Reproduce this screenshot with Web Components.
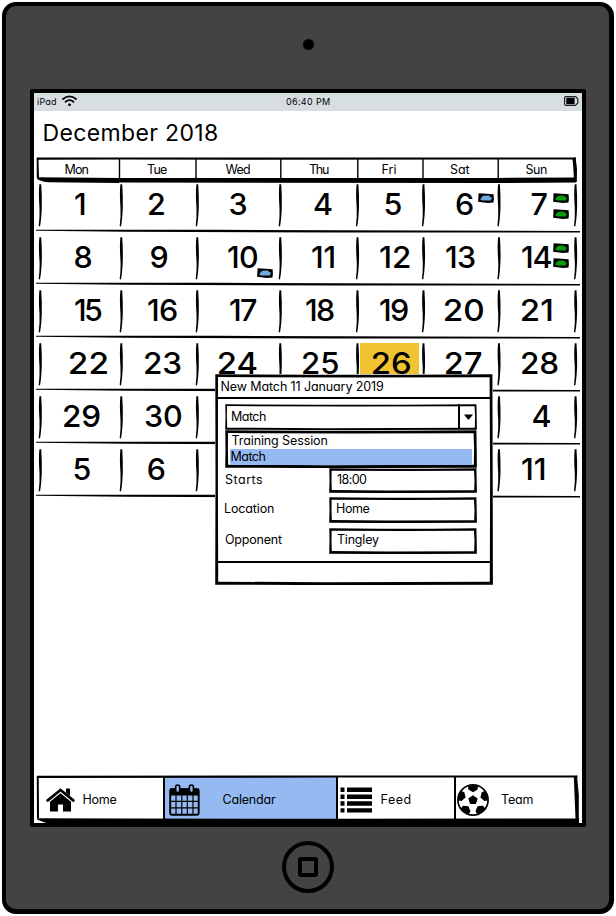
<!DOCTYPE html>
<html lang="en">
<head>
<meta charset="utf-8">
<title>Team calendar</title>
<style>
body{margin:0;background:#fff;color:#000;font-family:Inter,"Open Sans",sans-serif;font-size:12.5px}
</style>
</head>
<body>
<tablet-frame>
  <status-bar></status-bar>
  <month-view></month-view>
  <tab-bar>
    <tab-item icon="home" label="Home" w="33" at="46.5" style="width:128px"></tab-item>
    <tab-item icon="calendar" label="Calendar" w="53.5" at="57.5" active style="width:173px"></tab-item>
    <tab-item icon="list" label="Feed" w="29" at="43.5" style="width:118px"></tab-item>
    <tab-item icon="ball" label="Team" w="31.5" at="45" style="width:122px"></tab-item>
  </tab-bar>
  <match-dialog slot="overlay"></match-dialog>
</tablet-frame>

<script>
const ctx = document.createElement('canvas').getContext('2d');
function shadow(el, html){
  const t = document.createElement('template');
  t.innerHTML = html;
  const r = el.attachShadow({mode:'open'});
  r.appendChild(t.content.cloneNode(true));
  return r;
}

/* A single line of text whose visible ink is `w` pixels wide: tracked, or widened when `stretch` is set. */
class InkText extends HTMLElement{
  connectedCallback(){
    if(this.shadowRoot) return;
    const r = shadow(this, `<style>
      :host{display:block;white-space:pre;flex:none}
      span{display:inline-block;font-feature-settings:"cv11","kern";}
    </style><span></span>`);
    const s = r.querySelector('span'), text = this.getAttribute('text'), w = +this.getAttribute('w');
    s.textContent = text;
    const cs = getComputedStyle(s);
    ctx.font = cs.fontWeight+' '+cs.fontSize+' '+cs.fontFamily;
    const a = ctx.measureText(text[0]), b = ctx.measureText(text[text.length-1]);
    const lsb = -a.actualBoundingBoxLeft, rsb = b.width - b.actualBoundingBoxRight;
    const ink = s.getBoundingClientRect().width - lsb - rsb;
    s.style.marginLeft = -lsb+'px';
    if(this.hasAttribute('stretch') && w > ink && text.length > 1){
      s.style.transformOrigin = lsb+'px 50%';
      s.style.transform = `scaleX(${w/ink})`;
    }
    else if(text.length > 1) s.style.letterSpacing = (w-ink)/(text.length-1)+'px';
    else s.style.marginLeft = (w-ink)/2-lsb+'px';
    this.style.width = w+'px';
  }
}
customElements.define('ink-text', InkText);

class TabletFrame extends HTMLElement{
  constructor(){
    super();
    shadow(this, `<style>
      :host{display:block;padding:2px;width:612px;height:912px}
      .body{box-sizing:border-box;width:612px;height:912px;border:4px solid #000;border-width:4px 5px 5px 4px;border-radius:14px;background:#434343;display:flex;flex-direction:column;align-items:center}
      .top{height:83px;display:flex;align-items:center}
      .cam{width:11px;height:11px;border-radius:50%;background:#000;margin:-6px 0 0 1px}
      .screen{position:relative;box-sizing:border-box;width:556px;height:738px;border:4px solid #000;border-radius:2px;background:#fff;display:flex;flex-direction:column;align-self:flex-start;margin-left:24px}
      .bottom{flex:1;display:flex;align-items:center}
      .home{box-sizing:border-box;width:52px;height:52px;border:4px solid #000;border-radius:50%;display:grid;place-items:center;margin-top:-2px}
      .home i{box-sizing:border-box;width:20px;height:20px;border:4px solid #000;border-radius:3px}
    </style>
    <div class="body"><div class="top"><div class="cam"></div></div>
      <div class="screen"><slot></slot><slot name="overlay"></slot></div>
      <div class="bottom"><div class="home"><i></i></div></div></div>`);
  }
}

class StatusBar extends HTMLElement{
  constructor(){
    super();
    shadow(this, `<style>
      :host{display:grid;grid-template-columns:252px 1fr auto;align-items:center;height:18px;line-height:15px;background:#d7dee1;font-size:9px;font-weight:400}
      .l{display:flex;align-items:center;padding-left:3px;gap:6px}
      svg{display:block}
      ink-text{margin-top:-1px}
      .bat{margin:-2px 3px 0 0}
      .wifi{margin-top:-2px}
    </style>
    <div class="l"><ink-text text="iPad" w="19"></ink-text>
      <svg class="wifi" width="15" height="12" viewBox="0 0 15 12" fill="none" stroke="#000" stroke-width="1.8" stroke-linecap="round"><path d="M1 4Q7.5-1.3 14 4"/><path d="M3.6 6.8Q7.5 3.4 11.4 6.8"/><circle cx="7.5" cy="9.7" r="1" fill="#000" stroke-width="1"/></svg></div>
    <ink-text text="06:40 PM" w="44"></ink-text>
    <svg class="bat" width="15" height="10" viewBox="0 0 15 10"><path d="M1.5.7H11.5Q12.3.9 12.5 1.6L13.8 3V7L12.5 8.2Q12.3 9.1 11.5 9.3H1.5Q.7 9.2.6 8V2Q.7.8 1.5.7Z" fill="none" stroke="#222" stroke-width="1.2"/><rect x="2.3" y="1.8" width="8.3" height="6.4" fill="#000"/></svg>`);
  }
}

class EventChip extends HTMLElement{
  connectedCallback(){
    if(this.shadowRoot) return;
    shadow(this, `<style>:host{display:block;width:16px;height:11px}svg{display:block}</style>
    <svg width="16" height="11" viewBox="0 0 16 11"><path d="M.6.2L5 .6 15.6 1.2 15.9 6 15.5 9.5 10 10 .1 8.8Z"/><path d="M2.2 6.3L3.4 4.6 5.2 2.8 11.2 2.6 12 4 14 4.4 12.8 7.4 4 7.4Z" fill="${this.getAttribute('color')}"/></svg>`);
  }
}
customElements.define('event-chip', EventChip);

const B='#6fa8dc', G='#0a9b12';
const COLS=[37,120,196,280,357,423,498,582];
/* [day, ink left, ink width, chips: [colour, left, top]] */
const WEEKS=[
 [[1,75,10],[2,148,17],[3,230,16],[4,314,18],[5,386,15],[6,456,17,[[B,478,10]]],[7,532,15,[[G,553,10],[G,553,26]]]],
 [[8,75,16],[9,151,16],[10,228,29,[[B,257,32]]],[11,312,22.5],[12,380,29.5],[13,446,29],[14,522,29.5,[[G,553,7],[G,553,22]]]],
 [[15,75,27],[16,148,29],[17,230,27],[18,306,28],[19,380,28],[20,445,38],[21,522,30]],
 [[22,70,37],[23,145,36],[24,219,38],[25,303,35.5],[26,373,37.5],[27,446,36],[28,522,36]],
 [[29,64,36],[30,145,36],null,null,null,null,[4,533,17]],
 [[5,75,15],[6,148,16.5],null,null,null,null,[11,522,23]]
];
const HEADS=[['Mon',65.5,23],['Tue',147,20],['Wed',225.5,24.5],['Thu',309,20],['Fri',382.5,14],['Sat',450,19.5],['Sun',525.5,21.5]];

class WeekRow extends HTMLElement{
  set days(days){
    const strokes=[40,121,197,280,357.2,423.2,498.7,575.3].map(x=>{
      const k=x-36;
      return `<path d="M${k-.6} 1.2L${k+1.2} 1.2Q${k+2.1} 14 ${k+1.8} 24Q${k+1.4} 36 ${k} 43.5L${k-1.3} 43Q${k-.1} 34 ${k-.5} 25Q${k-1.6} 10 ${k-.6} 1.2Z"/>`;
    }).join('');
    shadow(this, `<style>
      :host{display:grid;height:53px;width:546px}
      svg,.days{grid-area:1/1}
      svg{display:block;pointer-events:none;z-index:1}
      .days{display:grid;grid-template-columns:${COLS.slice(1).map((c,i)=>c-COLS[i]+'px').join(' ')};margin-left:1px;line-height:41px;font-size:30.5px;font-weight:500}
      .day{position:relative;display:flex;align-items:flex-start}
      .today{background:linear-gradient(#f1c232,#f1c232) 3px 1px/59px 45px no-repeat}
      event-chip{position:absolute}
    </style>
    <svg width="546" height="53" viewBox="0 0 546 53">${strokes}<path d="M0 46.7L180 46.8 544 47.9 544 49.4 300 49.4 90 48.8 0 47.8Z"/></svg>
    <div class="days">${days.map((d,i)=>d?`<div class="day ${d[0]===26?'today':''}"><ink-text stretch text="${d[0]}" w="${d[2]}" style="margin-left:${d[1]-COLS[i]}px"></ink-text>${(d[3]||[]).map(c=>`<event-chip color="${c[0]}" style="left:${c[1]-COLS[i]}px;top:${c[2]}px"></event-chip>`).join('')}</div>`:'<div class="day"></div>').join('')}</div>`);
  }
}
customElements.define('week-row', WeekRow);

class MonthView extends HTMLElement{
  constructor(){
    super();
    const r=shadow(this, `<style>
      :host{display:flex;flex-direction:column;flex:1;padding-left:2px}
      .title{height:46px;line-height:44px;font-size:23px;padding-left:8.5px}
      .head{display:grid;height:26px;width:546px}
      svg,.names{grid-area:1/1}
      svg{display:block}
      .names{display:grid;grid-template-columns:${COLS.slice(1).map((c,i)=>c-COLS[i]+'px').join(' ')};margin-left:1px;line-height:25px}
    </style>
    <div class="title"><ink-text text="December 2018" w="172.5"></ink-text></div>
    <div class="head"><svg width="546" height="26" viewBox="0 0 546 26">
      <path d="M.8.4L200 .6 540 .4V2.4L200 2.7 83 2.6 1 2.8Z"/>
      <path d="M.7 1H2.4L3 20 2.4 22 .8 21Z"/>
      <path d="M1.5 20.3L83 20.9 83 26 12 25.3 8 24.8 1.5 22.6Z"/>
      <path d="M82 20.9H462L540 20.6V25.4L462 26 83 25.6Z"/>
      <path d="M536.4 1L539.6.6 541 12 540.8 25H538L537.4 12Z"/>
      <path d="M83.5 2V22M160 2V22M244.8 2V22M321.8 2V22M387 2V22M462.2 2V22" stroke="#000" stroke-width="1.4"/></svg>
      <div class="names">${HEADS.map((h,i)=>`<ink-text text="${h[0]}" w="${h[2]}" style="margin-left:${h[1]-COLS[i]}px"></ink-text>`).join('')}</div></div>
    <div class="weeks"></div>`);
    for(const w of WEEKS){const row=document.createElement('week-row');row.days=w;r.querySelector('.weeks').appendChild(row);}
  }
}

const PATCH='<path d="M11 2L16 1 21 2 20.6 5.4 16 8.2 11.4 5.4Z"';
const ICONS={
 home:`<svg width="29" height="24" viewBox="0 0 29 24"><path d="M20 .6H24V8L20 4.6Z"/><path d="M.8 13.2L14.5 2 28.2 13.2" fill="none" stroke="#000" stroke-width="2.7"/><path d="M4 13.8L14.5 5.3 25 13.8V23.5H17V16.5H12V23.5H4Z"/></svg>`,
 calendar:`<svg width="31" height="32" viewBox="0 0 31 32"><path d="M1 5.5Q1 4.5 2 4.5H29Q30 4.5 30 5.5V11.5H1Z"/><rect x="1.2" y="5.2" width="28.5" height="25.6" rx="1.5" fill="none" stroke="#000" stroke-width="1.9"/><path d="M7 11V30M12.8 11V30M18.3 11V30M24 11V30M1 17.3H30M1 23.8H30" stroke="#000" stroke-width="1.2"/><g fill="#94baf1" stroke="#000" stroke-width="1.6"><rect x="6.7" y="1" width="4" height="7.5" rx="2"/><rect x="20.4" y="1" width="4" height="7.5" rx="2"/></g></svg>`,
 list:`<svg width="33" height="26" viewBox="0 0 33 26"><path d="M.5.5H4.5V5H.5ZM7 .5H32V5H7ZM.5 7.5H4.5V12H.5ZM7 7.5H32V12H7ZM.5 14.3H4.5V18.8H.5ZM7 14.3H32V18.8H7ZM.5 21.2H4.5V25.6H.5ZM7 21.2H32V25.6H7Z"/></svg>`,
 ball:`<svg width="32" height="32" viewBox="0 0 32 32"><circle cx="16" cy="16" r="15.1" fill="#fff" stroke="#000" stroke-width="1.7"/><path d="M16 11.2L20.7 14.6 18.9 20.1H13.1L11.3 14.6Z"/>${[0,72,144,216,288].map(a=>`${PATCH} transform="rotate(${a} 16 16)"/>`).join('')}</svg>`
};
const ICON_LEFT={home:8.5,calendar:3.5,list:2,ball:.5}, ICON_WIDTH={home:29,calendar:31,list:33,ball:32};

class TabItem extends HTMLElement{
  connectedCallback(){
    if(this.shadowRoot) return;
    const k=this.getAttribute('icon');
    shadow(this, `<style>
      :host{display:flex;align-items:center;box-sizing:border-box;height:43px;padding-top:4px;border-right:2px solid #000}
      :host([active]){background:#94baf1}
      :host(:last-of-type){border-right:0}
      svg{display:block;flex:none;margin:1px 0 0 ${ICON_LEFT[k]}px}
      ink-text{margin-left:${+this.getAttribute('at')-ICON_LEFT[k]-ICON_WIDTH[k]}px}
    </style>${ICONS[k]}<ink-text text="${this.getAttribute('label')}" w="${this.getAttribute('w')}"></ink-text>`);
  }
}
class TabBar extends HTMLElement{
  constructor(){
    super();
    shadow(this, `<style>
      :host{display:grid;height:48px;width:548px}
      svg,.items{grid-area:1/1}
      svg{display:block;z-index:1}
      .items{display:flex;margin-left:3px;padding-top:1px}
    </style>
    <div class="items"><slot></slot></div>
    <svg width="548" height="48" viewBox="0 0 548 48"><path d="M3 .7L300 .5 543.5.4V2.6L300 2.5 3 3Z"/><path d="M2.8 1H4.7L5 43H3Z"/><path d="M3 43.3L90 43.6 300 43.8 545 43.4V48H12L3 44.6Z"/><path d="M539.8 1L543 .7 544.8 20V46H541.6Z"/></svg>`);
  }
}

/* Box outlined with a slightly uneven pen stroke. */
class SketchBox extends HTMLElement{
  connectedCallback(){
    if(this.shadowRoot) return;
    const w=+this.getAttribute('w'), h=+this.getAttribute('h'), t=+(this.getAttribute('t')||2.6);
    shadow(this, `<style>
      :host{display:grid;width:${w}px;height:${h}px;flex:none}
      svg,.c{grid-area:1/1}
      svg{display:block}
      .c{min-width:0}
    </style>
    <svg width="${w}" height="${h}" viewBox="0 0 ${w} ${h}">
      <path fill-rule="evenodd" d="M.3.3L${w*.35} .8 ${w*.7} .7 ${w-.6} .3 ${w-.3} ${h*.5} ${w-.1} ${h-.2} ${w*.6} ${h-.1} ${w*.3} ${h-.1} .2 ${h-.3} .5 ${h*.5}Z
      M${t} ${t+.1}L${t-.1} ${h*.5} ${t+.2} ${h-t-.3} ${w*.4} ${h-t+.2} ${w-t-.2} ${h-t-.2} ${w-t+.1} ${h*.5} ${w-t-.4} ${t+.2} ${w*.5} ${t+.5}Z"/></svg>
    <div class="c"><slot></slot></div>`);
  }
}
customElements.define('sketch-box', SketchBox);

class MatchDialog extends HTMLElement{
  constructor(){
    super();
    const row=(label,lw,val,vw,h)=>`<div class="row"><ink-text text="${label}" w="${lw}"></ink-text><sketch-box w="148" h="${h}"><div class="val"><ink-text text="${val}" w="${vw}"></ink-text></div></sketch-box></div>`;
    shadow(this, `<style>
      :host{position:absolute;z-index:5;left:181px;top:281px;width:278px;height:211px;background:#fff}
      .title{height:23px;line-height:25px;padding-left:6.5px}
      .rule{height:2px;background:#000;margin:0 2px}
      .form{height:164px;padding-left:10px}
      .combo{display:flex;padding-top:5px}
      .in{display:flex;justify-content:space-between;line-height:25px;padding-left:7px}
      .arrow{box-sizing:border-box;width:19px;height:25px;border-left:2px solid #000;display:grid;place-items:center}
      .arrow svg{display:block}
      .opts{padding:3px 5px 0}
      .opt{height:16px;line-height:16px;padding-left:1.5px}
      .sel{background:#94baf1}
      .row{display:flex;justify-content:space-between;align-items:start;width:252px;line-height:24px}
      .val{padding-left:8px}
      .rows{display:grid;grid-template-rows:28.5px 31px 26px}
    </style>
    <sketch-box w="278" h="211" t="3">
      <div class="title"><ink-text text="New Match 11 January 2019" w="161.5"></ink-text></div>
      <div class="rule"></div>
      <div class="form">
        <div class="combo"><sketch-box w="252" h="26" t="2"><div class="in"><ink-text text="Match" w="34"></ink-text><div class="arrow"><svg width="9" height="6" viewBox="0 0 9 6"><path d="M0 .5H9L5 5.5H4Z"/></svg></div></div></sketch-box></div>
        <sketch-box w="252" h="38" t="3"><div class="opts"><div class="opt"><ink-text text="Training Session" w="96"></ink-text></div><div class="opt sel"><ink-text text="Match" w="34"></ink-text></div></div></sketch-box>
        <div class="rows">${row('Starts',37,'18:00',30,25)}${row('Location',49,'Home',32.5,26)}${row('Opponent',57,'Tingley',42,26)}</div>
      </div>
      <div class="rule" style="margin-top:-2px"></div>
    </sketch-box>`);
  }
}
customElements.define('status-bar', StatusBar);
customElements.define('month-view', MonthView);
customElements.define('tab-item', TabItem);
customElements.define('tab-bar', TabBar);
customElements.define('match-dialog', MatchDialog);
customElements.define('tablet-frame', TabletFrame);
</script>
</body>
</html>
